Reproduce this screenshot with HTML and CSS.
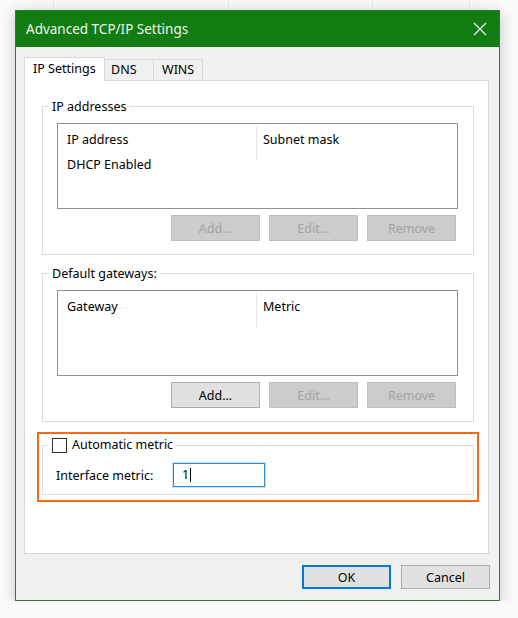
FILE: index.html
```html
<!DOCTYPE html>
<html lang="en">
<head>
    <meta charset="UTF-8">
    <meta name="viewport" content="width=device-width, initial-scale=1.0">
    <title>Advanced TCP/IP Settings</title>
    <link rel="stylesheet" href="styles.css">
</head>
<body>
    <div class="backdrop">
        <span class="cell c1"></span>
        <span class="cell c2"></span>
        <span class="cell c3"></span>
        <span class="cell c4"></span>
    </div>

    <div class="window">
        <div class="titlebar">
            <span class="title">Advanced TCP/IP Settings</span>
            <svg class="close" width="14" height="14" viewBox="0 0 14 14">
                <path d="M1 1L13 13M13 1L1 13" stroke="#e6f2e6" stroke-width="1.3" fill="none"/>
            </svg>
        </div>

        <div class="dialog">
            <div class="tabs">
                <div class="tab active">IP Settings</div>
                <div class="tab dns">DNS</div>
                <div class="tab wins">WINS</div>
            </div>

            <div class="panel">
                <fieldset class="group">
                    <legend>IP addresses</legend>
                    <div class="list">
                        <div class="list-head">
                            <span class="col first">IP address</span>
                            <span class="col second">Subnet mask</span>
                        </div>
                        <div class="list-row">DHCP Enabled</div>
                    </div>
                    <div class="actions">
                        <button class="btn" disabled>Add...</button>
                        <button class="btn" disabled>Edit...</button>
                        <button class="btn" disabled>Remove</button>
                    </div>
                </fieldset>

                <fieldset class="group gateways">
                    <legend>Default gateways:</legend>
                    <div class="list">
                        <div class="list-head">
                            <span class="col first">Gateway</span>
                            <span class="col second">Metric</span>
                        </div>
                    </div>
                    <div class="actions">
                        <button class="btn">Add...</button>
                        <button class="btn" disabled>Edit...</button>
                        <button class="btn" disabled>Remove</button>
                    </div>
                </fieldset>

                <div class="highlight">
                    <fieldset class="group metric">
                        <legend><span class="checkbox"></span>Automatic metric</legend>
                        <div class="field">
                            <label class="field-label">Interface metric:</label>
                            <div class="input">1<span class="caret"></span></div>
                        </div>
                    </fieldset>
                </div>
            </div>

            <div class="footer">
                <button class="btn default">OK</button>
                <button class="btn">Cancel</button>
            </div>
        </div>
    </div>
</body>
</html>
```

FILE: styles.css
```css
body {
    margin: 0;
    background: #fafafa;
    font-family: "Noto Sans", "Open Sans", sans-serif;
    font-size: 12.5px;
    color: #000;
}
.backdrop {
    display: flex;
    height: 10px;
}
.cell {
    box-sizing: border-box;
    height: 10px;
    border-right: 1px solid #e2e2e2;
}
.c1 { width: 54px; }
.c2 { width: 175px; }
.c3 { width: 144px; }
.c4 { width: 97px; }

.window {
    box-sizing: border-box;
    width: 485px;
    height: 591px;
    margin-left: 15px;
    border: 1px solid #2a7f2a;
    background: #f0f0f0;
    box-shadow: 0 3px 14px rgba(0, 0, 0, 0.22);
}
.titlebar {
    height: 36px;
    background: #127b12;
    display: flex;
    align-items: center;
    justify-content: space-between;
    padding: 0 12px 0 10px;
}
.title {
    color: #eef6ee;
    font-size: 13.5px;
}
.close {
    display: block;
}

.dialog {
    padding: 10px 10px 0 8px;
}
.tabs {
    display: flex;
    align-items: flex-end;
    height: 23px;
}
.tab {
    box-sizing: border-box;
    height: 21px;
    line-height: 19px;
    padding-left: 6px;
    border: 1px solid #d9d9d9;
    border-bottom: none;
    background: #f0f0f0;
}
.tab.active {
    width: 81px;
    height: 24px;
    line-height: 21px;
    padding-left: 8px;
    margin-bottom: -1px;
    background: #fff;
    position: relative;
    z-index: 1;
}
.tab.dns {
    width: 50px;
    margin-left: -1px;
}
.tab.wins {
    width: 50px;
    margin-left: -1px;
    padding-left: 8px;
}

.panel {
    box-sizing: border-box;
    width: 465px;
    height: 474px;
    background: #fff;
    border: 1px solid #d9d9d9;
    padding: 17px 14px 0 17px;
}
.group {
    margin: 0;
    padding: 8px 15px 13px 14px;
    border: 1px solid #dcdcdc;
    min-width: 0;
}
.group legend {
    margin-left: -8px;
    padding: 0 3px;
    line-height: 17px;
}
.gateways {
    margin-top: 10px;
}

.list {
    box-sizing: border-box;
    height: 86px;
    border: 1px solid #8f9090;
    background: #fff;
}
.list-head {
    display: flex;
    height: 30px;
}
.col {
    line-height: 16px;
}
.col.first {
    width: 189px;
    padding: 8px 0 0 9px;
}
.col.second {
    margin-top: 2px;
    height: 28px;
    padding: 6px 0 0 6px;
    border-left: 1px solid #e5e5e5;
}
.list-row {
    padding: 3px 0 0 9px;
    line-height: 16px;
}

.actions {
    display: flex;
    justify-content: flex-end;
    gap: 9px;
    margin-top: 6px;
    padding-right: 2px;
}
.btn {
    box-sizing: border-box;
    width: 89px;
    height: 26px;
    padding: 0;
    font-family: inherit;
    font-size: 12.5px;
    color: #000;
    background: #e1e1e1;
    border: 1px solid #adadad;
}
.btn:disabled {
    color: #a3a3a3;
    background: #cccccc;
    border-color: #bfbfbf;
}

.highlight {
    margin: 10px -5px 0 -5px;
    border: 2px solid #f56b15;
    padding: 3px 3px 5px 3px;
}
.metric {
    padding: 10px 15px 7px 13px;
}
.metric legend {
    margin-left: -7px;
    display: flex;
    align-items: center;
    gap: 5px;
    line-height: 16px;
}
.checkbox {
    box-sizing: border-box;
    width: 15px;
    height: 15px;
    border: 1px solid #333;
    background: #fff;
}
.field {
    display: flex;
    align-items: center;
}
.field-label {
    width: 117px;
}
.input {
    box-sizing: border-box;
    width: 92px;
    height: 24px;
    border: 1px solid #2f8bd6;
    box-shadow: 0 0 0 1px rgba(0, 120, 215, 0.22);
    padding-left: 8px;
    line-height: 22px;
    display: flex;
    align-items: center;
}
.caret {
    width: 1px;
    height: 14px;
    margin-left: 1px;
    background: #000;
}

.footer {
    display: flex;
    justify-content: flex-end;
    gap: 10px;
    margin-top: 11px;
    margin-right: -1px;
}
.footer .btn {
    width: 89px;
    height: 24px;
}
.footer .btn.default {
    border: 2px solid #0078d7;
}
```
